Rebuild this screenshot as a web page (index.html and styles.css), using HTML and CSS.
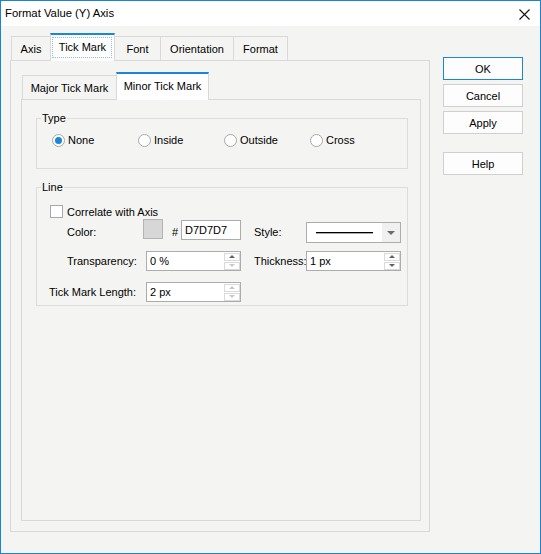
FILE: index.html
```html
<!DOCTYPE html>
<html>
<head>
<meta charset="utf-8">
<link rel="stylesheet" href="styles.css">
</head>
<body>
<div class="window">
  <div class="titlebar">
    <span class="title">Format Value (Y) Axis</span>
    <svg class="close" width="11" height="11" viewBox="0 0 11 11"><path d="M0.5 0.5 L10.5 10.5 M10.5 0.5 L0.5 10.5" stroke="#111" stroke-width="1.1" fill="none"/></svg>
  </div>
  <div class="body">
    <div class="left">
      <div class="tabs outer-tabs">
        <div class="tab w-axis">Axis</div>
        <div class="tab active w-tick">Tick Mark<span class="focus"></span></div>
        <div class="tab w-font">Font</div>
        <div class="tab w-orient">Orientation</div>
        <div class="tab w-format">Format</div>
      </div>
      <div class="panel outer-panel">
        <div class="tabs inner-tabs">
          <div class="tab w-major">Major Tick Mark</div>
          <div class="tab active w-minor">Minor Tick Mark</div>
        </div>
        <div class="panel inner-panel">
          <fieldset class="group type-group">
            <legend>Type</legend>
            <div class="radios">
              <label class="radio-item"><span class="radio checked"></span>None</label>
              <label class="radio-item"><span class="radio"></span>Inside</label>
              <label class="radio-item"><span class="radio"></span>Outside</label>
              <label class="radio-item"><span class="radio"></span>Cross</label>
            </div>
          </fieldset>
          <fieldset class="group line-group">
            <legend>Line</legend>
            <div class="line-body">
              <div class="row row-check">
                <span class="checkbox"></span><span class="check-label">Correlate with Axis</span>
              </div>
              <div class="row row-color">
                <span class="lbl lbl-indent lbl-top w-lbl1">Color:</span>
                <span class="swatch"></span>
                <span class="lbl lbl-top hash">#</span>
                <div class="field field-hex"><span class="val">D7D7D7</span></div>
                <span class="lbl lbl-top lbl-right">Style:</span>
                <div class="combo">
                  <div class="line-area"><span class="line-sample"></span></div>
                  <div class="arrow"><span class="tri-down"></span></div>
                </div>
              </div>
              <div class="row row-trans">
                <span class="lbl lbl-indent w-lbl2">Transparency:</span>
                <div class="field field-num">
                  <span class="val">0 %</span>
                  <div class="spin"><span class="spin-btn"><span class="tri-up"></span></span><span class="spin-btn"><span class="tri-dn off"></span></span></div>
                </div>
                <span class="lbl lbl-right">Thickness:</span>
                <div class="field field-num">
                  <span class="val">1 px</span>
                  <div class="spin"><span class="spin-btn"><span class="tri-up"></span></span><span class="spin-btn"><span class="tri-dn"></span></span></div>
                </div>
              </div>
              <div class="row row-len">
                <span class="lbl lbl-len">Tick Mark Length:</span>
                <div class="field field-num">
                  <span class="val">2 px</span>
                  <div class="spin"><span class="spin-btn"><span class="tri-up off"></span></span><span class="spin-btn"><span class="tri-dn off"></span></span></div>
                </div>
              </div>
            </div>
          </fieldset>
        </div>
      </div>
    </div>
    <div class="buttons">
      <div class="btn default">OK</div>
      <div class="btn">Cancel</div>
      <div class="btn">Apply</div>
      <div class="btn help">Help</div>
    </div>
  </div>
</div>
</body>
</html>
```
FILE: styles.css
```css
* { box-sizing: border-box; }
html, body { margin: 0; padding: 0; }
body {
  font-family: "Liberation Sans", Arial, sans-serif;
  font-size: 11px;
  color: #000;
  background: #f4f5f2;
}
.window {
  width: 541px;
  height: 554px;
  border: 1px solid #1883d7;
  background: #f4f5f2;
  overflow: hidden;
}
.titlebar {
  height: 25px;
  background: #fff;
  display: flex;
  align-items: center;
  justify-content: space-between;
  padding: 0 10px 0 4px;
}
.title { font-size: 11.3px; line-height: 25px; }
.close { display: block; margin-top: 1px; }

.body {
  display: flex;
  padding: 7px 0 0 9px;
}
.left { width: 420px; }

.tabs {
  display: flex;
  align-items: flex-end;
  height: 27px;
}
.outer-tabs { padding-left: 1px; }
.inner-tabs { margin-left: 1px; flex: none; }
.tab {
  height: 24px;
  border: 1px solid #d9d9d9;
  border-bottom: none;
  margin-right: -1px;
  background: #f4f5f2;
  display: flex;
  align-items: center;
  justify-content: center;
  line-height: 14px;
  padding-top: 1px;
}
.tab.active {
  position: relative;
  z-index: 1;
  height: 28px;
  margin-bottom: -1px;
  background: #fff;
  border-top: 2px solid #1a86d6;
  padding-top: 0;
  padding-bottom: 3px;
}
.focus {
  position: absolute;
  top: 2px; left: 1px; right: 2px; bottom: 3px;
  border: 1px dotted #8cc0ea;
}
.w-axis { width: 40px; }
.w-tick { width: 65px; }
.w-font { width: 47px; }
.w-orient { width: 74px; }
.w-format { width: 55px; }
.w-major { width: 95px; }
.w-minor { width: 93px; }

.panel { border: 1px solid #d9d9d9; }
.outer-panel {
  height: 472px;
  display: flex;
  flex-direction: column;
  padding: 11px 8px 10px 10px;
}
.inner-panel {
  flex: 1;
  padding: 11px 12px 0 14px;
}

.group {
  margin: 0;
  padding: 0;
  min-width: 0;
  width: 372px;
  border: 1px solid #dcdcdc;
}
.group legend {
  padding: 0 1px;
  margin-left: 4px;
  line-height: 14px;
}
.radios {
  display: grid;
  grid-template-columns: repeat(4, 86px);
  padding: 7px 0 20px 15px;
}
.radio-item {
  display: flex;
  align-items: center;
  height: 16px;
}
.radio {
  width: 13px;
  height: 13px;
  border: 1px solid #a8a8a8;
  border-radius: 50%;
  background: #fff;
  margin-right: 3px;
  display: flex;
  align-items: center;
  justify-content: center;
}
.radio.checked::after {
  content: "";
  width: 7px;
  height: 7px;
  border-radius: 50%;
  background: #1a86d6;
}

.line-group { margin-top: 11px; }
.line-body { padding: 10px 0 3px 0; }
.row { display: flex; }
.row-check {
  height: 15px;
  align-items: center;
  padding-left: 13px;
}
.checkbox {
  width: 13px;
  height: 13px;
  border: 1px solid #a8a8a8;
  background: #fff;
  margin-right: 4px;
}
.row-color { align-items: flex-start; height: 24px; }
.lbl { line-height: 20px; white-space: nowrap; }
.lbl-top { line-height: 14px; margin-top: 6px; }
.lbl-indent { margin-left: 30px; }
.w-lbl1 { width: 76px; }
.w-lbl2 { width: 79px; }
.lbl-right { margin-left: 13px; width: 52px; }
.swatch {
  width: 20px;
  height: 20px;
  border: 1px solid #b4b4b4;
  background: #d7d7d7;
}
.hash { margin-left: 9px; width: 9px; }
.field {
  height: 20px;
  border: 1px solid #acacac;
  background: #fff;
  display: flex;
  align-items: center;
}
.field .val { flex: 1; padding-left: 3px; line-height: 14px; }
.field-hex { width: 60px; margin-top: 1px; }
.field-num { width: 95px; }
.combo {
  width: 95px;
  height: 21px;
  margin-top: 3px;
  border: 1px solid #acacac;
  background: #fff;
  display: flex;
}
.line-area {
  flex: 1;
  display: flex;
  align-items: center;
  padding-left: 9px;
}
.line-sample {
  width: 57px;
  height: 1px;
  background: #000;
  box-shadow: 0 0.5px 0 #555;
}
.arrow {
  width: 18px;
  background: #f0f0f0;
  display: flex;
  align-items: center;
  justify-content: center;
}
.tri-down {
  width: 0; height: 0;
  border-left: 4.5px solid transparent;
  border-right: 4.5px solid transparent;
  border-top: 4px solid #6a6a6a;
}
.spin {
  display: flex;
  flex-direction: column;
  gap: 1px;
  margin-right: 0;
  width: 16px;
}
.spin-btn {
  height: 8px;
  border: 1px solid #dadada;
  display: flex;
  align-items: center;
  justify-content: center;
}
.tri-up, .tri-dn {
  width: 0; height: 0;
  border-left: 3px solid transparent;
  border-right: 3px solid transparent;
}
.tri-up { border-bottom: 3px solid #606060; }
.tri-dn { border-top: 3px solid #606060; }
.tri-up.off { border-bottom-color: #c8c8c8; }
.tri-dn.off { border-top-color: #c8c8c8; }

.row-trans { margin-top: 8px; height: 20px; }
.row-len { margin-top: 11px; height: 20px; }
.lbl-len { margin-left: 12px; width: 97px; }

.buttons {
  margin-left: 13px;
  width: 80px;
  padding-top: 24px;
  display: flex;
  flex-direction: column;
  gap: 4px;
}
.btn {
  height: 23px;
  border: 1px solid #d0d0d0;
  background: #fdfdfd;
  display: flex;
  align-items: center;
  justify-content: center;
  line-height: 14px;
}
.btn.default { border-color: #1a86d6; }
.btn.help { margin-top: 14px; }
```
